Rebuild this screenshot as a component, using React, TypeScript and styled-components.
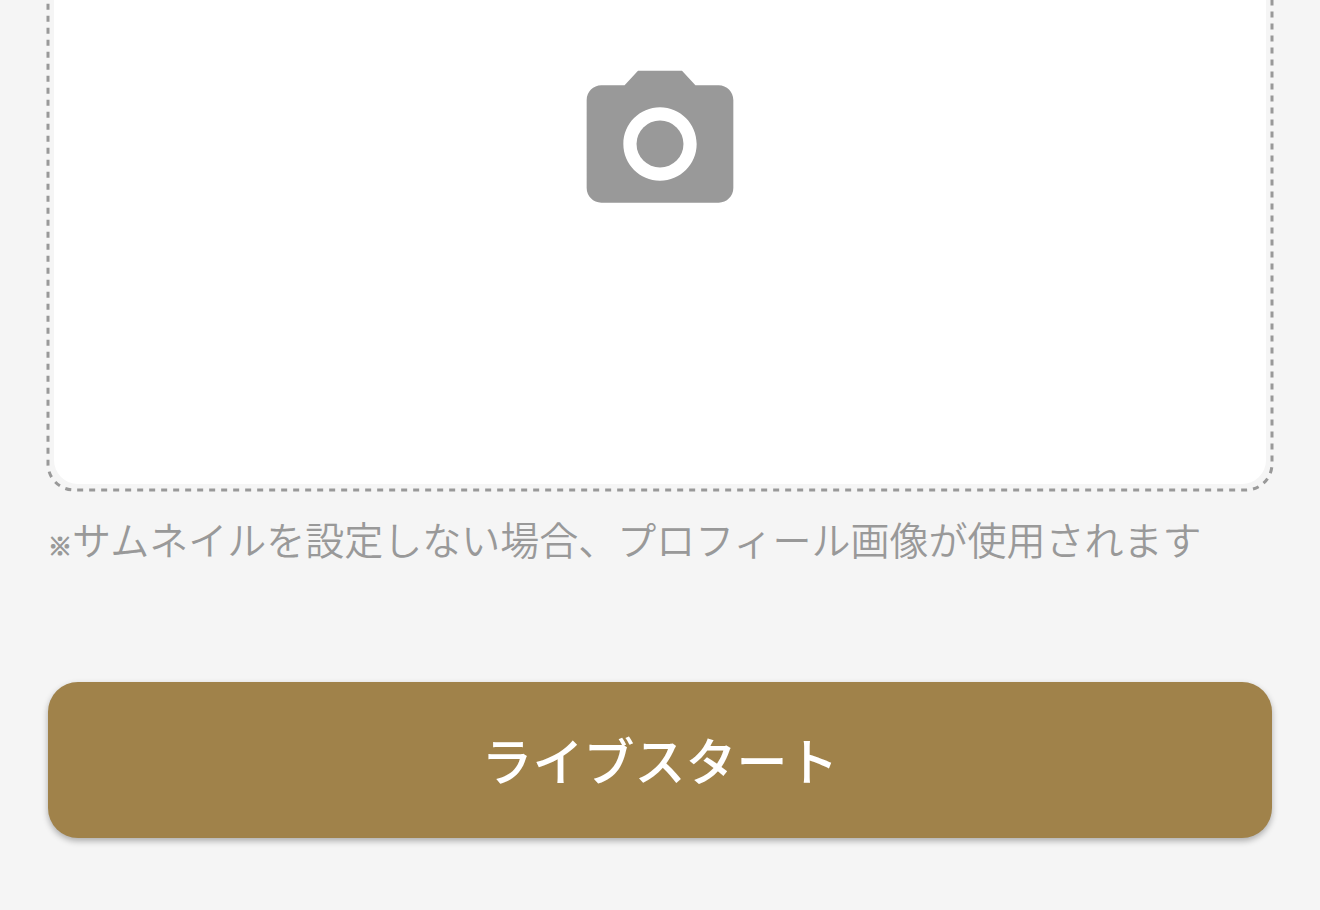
import React from "react";
import styled, { createGlobalStyle } from "styled-components";

const GlobalStyle = createGlobalStyle`
  * { box-sizing: border-box; }
  body {
    margin: 0;
    background: #f5f5f5;
    font-family: "Noto Sans CJK JP", sans-serif;
  }
`;

/* Content is anchored to the bottom; the top of the thumbnail scrolls out of view. */
const Page = styled.main`
  display: flex;
  flex-direction: column;
  justify-content: flex-end;
  height: 100vh;
  padding: 0 48px 72px;
  overflow: hidden;
`;

const ThumbnailPicker = styled.button`
  position: relative;
  flex: none;
  display: flex;
  width: 100%;
  aspect-ratio: 306 / 173;
  padding: 6px;
  border: 0;
  background: transparent;
  cursor: pointer;
`;

const ThumbnailSurface = styled.span`
  flex: 1;
  display: flex;
  align-items: center;
  justify-content: center;
  border-radius: 24px;
  background: #fff;
`;

const DashedOutline = styled.svg`
  position: absolute;
  inset: 0;
  width: 100%;
  height: 100%;
  overflow: visible;
  fill: none;
  stroke: #999;
  stroke-width: 3px;
  stroke-dasharray: 6 6;
  stroke-dashoffset: 4px;
`;

const CameraIcon = styled.svg`
  width: 176px;
  height: 176px;
  fill: #999;
`;

const Note = styled.p`
  flex: none;
  margin: 20px 0 116px;
  color: #999;
  font-size: 39px;
  font-weight: 350;
  line-height: 56px;
  white-space: nowrap;
`;

const NoteMark = styled.span`
  font-size: 24px;
  line-height: 24px;
  -webkit-text-stroke: 1px #999;
`;

const StartButton = styled.button`
  flex: none;
  width: 100%;
  height: 156px;
  padding: 0 0 2px;
  border: 0;
  border-radius: 30px;
  background: #a0824a;
  box-shadow: 0 3px 6px rgba(0, 0, 0, 0.3);
  color: #fff;
  font-family: inherit;
  font-size: 51px;
  font-weight: 500;
  line-height: 72px;
  cursor: pointer;
`;

export default function App() {
  return (
    <>
      <GlobalStyle />
      <Page>
        <ThumbnailPicker type="button" aria-label="サムネイルを設定">
          <ThumbnailSurface>
            <CameraIcon viewBox="0 0 24 24" aria-hidden="true">
              <circle cx="12" cy="12" r="3.2" />
              <path d="M9 2L7.17 4H4c-1.1 0-2 .9-2 2v12c0 1.1.9 2 2 2h16c1.1 0 2-.9 2-2V6c0-1.1-.9-2-2-2h-3.17L15 2H9zm3 15c-2.76 0-5-2.24-5-5s2.24-5 5-5 5 2.24 5 5-2.24 5-5 5z" />
            </CameraIcon>
          </ThumbnailSurface>
          <DashedOutline aria-hidden="true">
            <rect width="100%" height="100%" rx="26" />
          </DashedOutline>
        </ThumbnailPicker>
        <Note>
          <NoteMark>※</NoteMark>サムネイルを設定しない場合、プロフィール画像が使用されます
        </Note>
        <StartButton type="button">ライブスタート</StartButton>
      </Page>
    </>
  );
}
